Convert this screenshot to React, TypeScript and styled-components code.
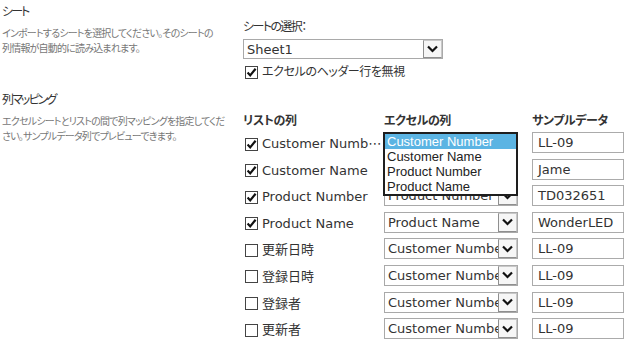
import styled, { createGlobalStyle } from "styled-components";

const GlobalStyle = createGlobalStyle`
  html, body {
    margin: 0;
    padding: 0;
    background: #fff;
  }
  body {
    font-family: "DejaVu Sans", "Noto Sans CJK JP", sans-serif;
    font-feature-settings: "palt";
    color: #444;
  }
`;

const Page = styled.div`
  width: 630px;
  padding-left: 2px;
  box-sizing: border-box;
`;

const Section = styled.section<{ $h?: number }>`
  display: grid;
  grid-template-columns: 241px 1fr;
  height: ${(p) => (p.$h ? `${p.$h}px` : "auto")};
`;

const SideCol = styled.div<{ $top?: number }>`
  padding-top: ${(p) => p.$top ?? 0}px;
`;

const Title = styled.h2`
  margin: 0;
  font-size: 12px;
  font-weight: normal;
  letter-spacing: -1.9px;
  line-height: 16px;
  color: #333;
`;

const Desc = styled.p`
  margin: 6px 0 0;
  font-size: 10px;
  letter-spacing: -0.8px;
  line-height: 15px;
  color: #777;
  white-space: nowrap;
`;

const MainCol = styled.div<{ $top: number }>`
  padding-top: ${(p) => p.$top}px;
`;

const Label = styled.div`
  font-size: 12px;
  letter-spacing: -1.6px;
  line-height: 16px;
  color: #333;
`;

const Select = styled.div<{ $w: number; $h: number }>`
  display: flex;
  align-items: center;
  width: ${(p) => p.$w}px;
  height: ${(p) => p.$h}px;
  box-sizing: border-box;
  border: 1px solid #a9a9a9;
  background: #fff;
  font-size: 13px;
  color: #333;
`;

const SelectText = styled.span`
  flex: 1;
  padding-left: 3px;
  white-space: nowrap;
  overflow: hidden;
`;

const DropBtn = styled.span`
  width: 19px;
  height: 100%;
  box-sizing: border-box;
  border: 1px solid #8f8f8f;
  border-right-color: #c8c8c8;
  border-top-color: #c8c8c8;
  background: #f6f6f6;
  display: flex;
  align-items: center;
  justify-content: center;
`;

const SheetPick = styled.div`
  margin-top: 4px;
`;

const CheckLine = styled.label<{ $mt?: number }>`
  display: flex;
  align-items: center;
  gap: 4px;
  margin-top: ${(p) => p.$mt ?? 0}px;
  padding-left: 2px;
  font-size: 13px;
  line-height: 16px;
  color: #333;
  white-space: nowrap;
`;

const JpText = styled.span`
  font-size: 12px;
  letter-spacing: -0.4px;
`;

const Box = styled.span`
  flex: none;
  width: 13px;
  height: 13px;
  box-sizing: border-box;
  border: 1px solid #444;
  background: #fff;
  display: flex;
  align-items: center;
  justify-content: center;
`;

const Head = styled.div`
  display: grid;
  grid-template-columns: 141px 148px 92px;
  font-size: 12px;
  font-weight: bold;
  letter-spacing: -0.4px;
  line-height: 15px;
  color: #333;
  margin-bottom: 3px;
`;

const Rows = styled.div`
  display: flex;
  flex-direction: column;
  gap: 5.6px;
`;

const Row = styled.div`
  display: grid;
  grid-template-columns: 141px 148px 92px;
  align-items: center;
  height: 21px;
`;

const NameCell = styled(CheckLine)`
  padding-top: 3px;
`;

const ExcelCell = styled.div`
  position: relative;
`;

const SampleBox = styled.div`
  width: 92px;
  height: 21px;
  box-sizing: border-box;
  border: 1px solid #ababab;
  padding-left: 5px;
  font-size: 13px;
  line-height: 19px;
  color: #333;
  white-space: nowrap;
  overflow: hidden;
`;

const ListBox = styled.ul`
  position: absolute;
  top: 0;
  left: -1px;
  z-index: 2;
  width: 135px;
  margin: 0;
  padding: 0;
  list-style: none;
  box-sizing: border-box;
  border: 2px solid #1e1e1e;
  background: #fff;
  font-family: "Liberation Sans", Arial, sans-serif;
  font-size: 13px;
`;

const ListItem = styled.li<{ $active?: boolean }>`
  height: 15px;
  line-height: 15px;
  padding-left: 2px;
  color: ${(p) => (p.$active ? "#fff" : "#222")};
  background: ${(p) => (p.$active ? "#5bb4e3" : "transparent")};
`;

function Check({ checked }: { checked: boolean }) {
  return (
    <Box>
      {checked && (
        <svg width="11" height="11" viewBox="0 0 11 11">
          <path d="M1.6 5.6 L4.2 8.4 L9.6 1.8" fill="none" stroke="#111" strokeWidth="2.2" />
        </svg>
      )}
    </Box>
  );
}

function Chevron() {
  return (
    <svg width="11" height="8" viewBox="0 0 11 8">
      <path d="M1 1.5 L5.5 6 L10 1.5" fill="none" stroke="#111" strokeWidth="2.2" />
    </svg>
  );
}

function Dropdown({ value, w, h }: { value: string; w: number; h: number }) {
  return (
    <Select $w={w} $h={h}>
      <SelectText>{value}</SelectText>
      <DropBtn>
        <Chevron />
      </DropBtn>
    </Select>
  );
}

const options = ["Customer Number", "Customer Name", "Product Number", "Product Name"];

const rows = [
  { name: "Customer Numb⋯", checked: true, excel: "Customer Number", sample: "LL-09", open: true },
  { name: "Customer Name", checked: true, excel: "Customer Name", sample: "Jame" },
  { name: "Product Number", checked: true, excel: "Product Number", sample: "TD032651" },
  { name: "Product Name", checked: true, excel: "Product Name", sample: "WonderLED" },
  { name: "更新日時", checked: false, excel: "Customer Number", sample: "LL-09" },
  { name: "登録日時", checked: false, excel: "Customer Number", sample: "LL-09" },
  { name: "登録者", checked: false, excel: "Customer Number", sample: "LL-09" },
  { name: "更新者", checked: false, excel: "Customer Number", sample: "LL-09" },
];

export default function App() {
  return (
    <Page>
      <GlobalStyle />
      <Section $h={92}>
        <SideCol $top={4}>
          <Title>シート</Title>
          <Desc>
            インポートするシートを選択してください。そのシートの
            <br />
            列情報が自動的に読み込まれます。
          </Desc>
        </SideCol>
        <MainCol $top={19}>
          <Label>シートの選択：</Label>
          <SheetPick>
            <Dropdown value="Sheet1" w={200} h={20} />
          </SheetPick>
          <CheckLine $mt={5}>
            <Check checked />
            <JpText>エクセルのヘッダー行を無視</JpText>
          </CheckLine>
        </MainCol>
      </Section>
      <Section>
        <SideCol>
          <Title>列マッピング</Title>
          <Desc>
            エクセルシートとリストの間で列マッピングを指定してくだ
            <br />
            さい。サンプルデータ列でプレビューできます。
          </Desc>
        </SideCol>
        <MainCol $top={22}>
          <Head>
            <span>リストの列</span>
            <span>エクセルの列</span>
            <span>サンプルデータ</span>
          </Head>
          <Rows>
            {rows.map((r, i) => (
              <Row key={i}>
                <NameCell>
                  <Check checked={r.checked} />
                  {r.name}
                </NameCell>
                <ExcelCell>
                  <Dropdown value={r.excel} w={134} h={21} />
                  {r.open && (
                    <ListBox>
                      {options.map((o, j) => (
                        <ListItem key={o} $active={j === 0}>
                          {o}
                        </ListItem>
                      ))}
                    </ListBox>
                  )}
                </ExcelCell>
                <SampleBox>{r.sample}</SampleBox>
              </Row>
            ))}
          </Rows>
        </MainCol>
      </Section>
    </Page>
  );
}
